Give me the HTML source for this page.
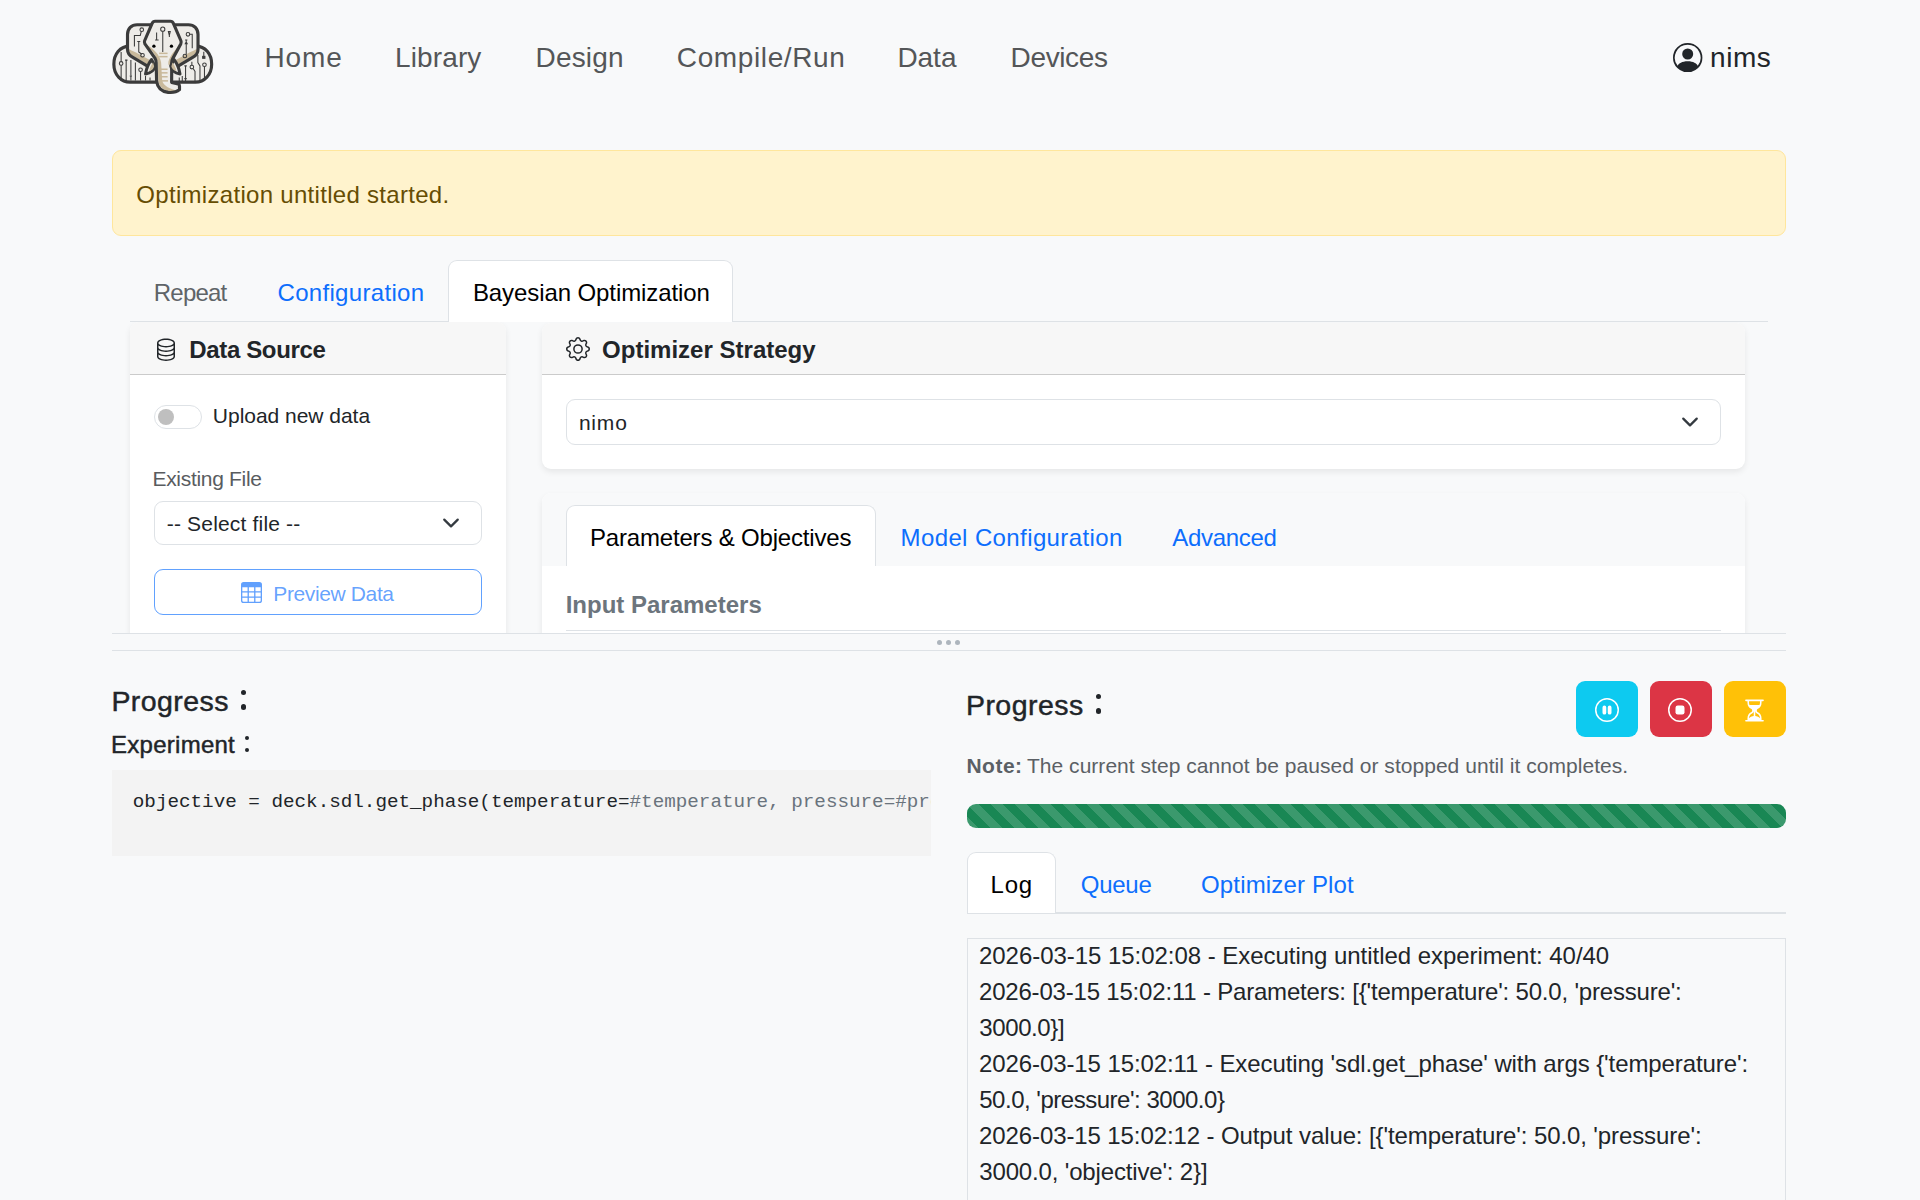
<!DOCTYPE html>
<html><head><meta charset="utf-8"><title>Optimization</title>
<style>
html,body{margin:0;padding:0;}
body{width:1920px;height:1200px;overflow:hidden;background:#f8f9fa;position:relative;font-family:"Liberation Sans",sans-serif;color:#212529;}
.t{position:absolute;line-height:1;white-space:nowrap;}
.r,.a{position:absolute;}
.b{font-weight:bold;}
.m{-webkit-text-stroke:0.45px currentColor;}
</style></head><body>
<svg class="a" style="left:105px;top:10px" width="115" height="90" viewBox="0 0 1533 1200">
<defs>
<g id="lowlobe"><path d="M335,482 C195,482 118,595 118,722 C118,862 215,962 335,962 L720,962 L720,482 Z" fill="#eeece8" stroke="#3b3b3b" stroke-width="42"/></g>
<g id="uplobe">
  <path d="M650,196 L428,196 C352,196 300,250 300,328 L300,525 C300,575 322,603 372,632 L600,768 L680,720 L650,196 Z" fill="#eeece8"/>
  <path d="M302,505 C312,560 340,590 380,612 L600,745 L640,690 L420,570 C370,545 330,530 302,505 Z" fill="#c9b99b"/>
</g>
<g id="upline"><path d="M650,196 L428,196 C352,196 300,250 300,328 L300,525 C300,575 322,603 372,632 L600,768" fill="none" stroke="#3b3b3b" stroke-width="42" stroke-linejoin="round"/></g>
</defs>
<use href="#lowlobe"/>
<use href="#lowlobe" transform="translate(1540,0) scale(-1,1)"/>
<g stroke="#3b3b3b" stroke-width="14" fill="none">
  <path d="M215,560 V940"/><circle cx="215" cy="712" r="24" fill="#eeece8"/>
  <path d="M282,668 V940 M268,668 H300"/>
  <path d="M345,668 V870 M330,880 H360 M345,880 V940"/>
  <path d="M405,700 V940"/>
  <path d="M474,820 V940"/><circle cx="474" cy="796" r="24" fill="#eeece8"/>
  <path d="M540,880 V940 M600,900 V940"/>
  <!-- right lower -->
  <path d="M1326,754 V940"/><circle cx="1326" cy="730" r="24" fill="#eeece8"/>
  <path d="M1317,558 V620"/><rect x="1302" y="618" width="30" height="26" fill="#3b3b3b"/>
  <path d="M1238,600 V700 L1266,745 V945"/>
  <path d="M1158,690 V737 M1175,780 L1200,820 V945"/><circle cx="1158" cy="761" r="24" fill="#eeece8"/>
  <path d="M1074,745 V945 M1058,745 H1090 M1058,915 H1090"/>
  <path d="M990,900 V945 M1030,880 V945"/>
</g>
<use href="#uplobe"/>
<use href="#uplobe" transform="translate(1540,0) scale(-1,1)"/>
<g stroke="#3b3b3b" stroke-width="14" fill="none">
  <circle cx="490" cy="262" r="24"/>
  <path d="M484,286 L470,340 H392 V485"/>
  <path d="M430,420 H470 M450,420 V560 L490,590"/><circle cx="500" cy="603" r="24"/>
  <!-- right upper -->
  <circle cx="1106" cy="324" r="24"/>
  <path d="M1130,324 H1163 V510"/>
  <path d="M1083,399 V590 M1068,399 H1098 M1070,450 L1083,425 L1096,450 Z"/><circle cx="1065" cy="613" r="24"/>
</g>
<use href="#upline"/>
<use href="#upline" transform="translate(1540,0) scale(-1,1)"/>
<!-- head -->
<path d="M668,150 L872,150 Q900,150 912,178 L1012,410 Q1020,430 1010,452 L905,645 Q890,672 890,700 L888,965 L975,985 Q993,990 993,1012 L993,1062 Q940,1108 842,1098 Q705,1080 688,950 L682,700 Q682,672 668,645 L532,452 Q520,430 528,410 L628,178 Q640,150 668,150 Z" fill="#eeece8"/>
<path d="M540,455 C600,510 680,590 700,690 L712,950 C722,1030 790,1080 900,1092 L960,1072 C880,1062 775,1010 762,940 L748,700 C733,600 650,510 540,455 Z" fill="#c9b99b"/>
<path d="M1000,455 C950,520 865,600 845,690 L843,730 L895,730 L895,690 C905,610 950,530 1000,455 Z" fill="#c9b99b"/>
<g fill="#c9b99b">
<rect x="722" y="568" width="112" height="20"/><rect x="722" y="612" width="112" height="20"/>
<rect x="722" y="780" width="112" height="20"/><rect x="722" y="828" width="112" height="20"/>
<rect x="735" y="880" width="100" height="20"/><rect x="760" y="935" width="80" height="20"/>
</g>
<g stroke="#3b3b3b" stroke-width="14" fill="none">
<circle cx="770" cy="255" r="28"/><path d="M770,283 V560"/>
<path d="M688,300 V398 M668,400 H715"/>
<path d="M845,288 H870 L858,340 Z M858,340 V360"/>
</g>
<circle cx="652" cy="482" r="22" fill="#000"/><circle cx="886" cy="482" r="22" fill="#000"/>
<path d="M668,150 L872,150 Q900,150 912,178 L1012,410 Q1020,430 1010,452 L905,645 Q890,672 890,700 L888,965 L975,985 Q993,990 993,1012 L993,1062 Q940,1108 842,1098 Q705,1080 688,950 L682,700 Q682,672 668,645 L532,452 Q520,430 528,410 L628,178 Q640,150 668,150 Z" fill="none" stroke="#3b3b3b" stroke-width="42" stroke-linejoin="round"/>
<!-- tusks -->
<path d="M620,660 C575,720 550,790 540,852 C610,845 655,805 665,745 Z" fill="#eeece8" stroke="#3b3b3b" stroke-width="40" stroke-linejoin="round"/>
<path d="M640,700 C600,760 590,800 590,815 C630,805 650,780 655,750 Z" fill="#c9b99b"/>
<path d="M920,660 C965,720 990,790 1000,852 C930,845 885,805 875,745 Z" fill="#eeece8" stroke="#3b3b3b" stroke-width="40" stroke-linejoin="round"/>
<path d="M900,700 C940,760 950,800 950,815 C910,805 890,780 885,750 Z" fill="#c9b99b"/>
</svg>

<div class="t " style="left:264.49px;top:44.09px;font-size:28px;color:#545658;letter-spacing:0.870px;">Home</div>
<div class="t " style="left:394.99px;top:44.09px;font-size:28px;color:#545658;letter-spacing:0.128px;">Library</div>
<div class="t " style="left:535.49px;top:44.09px;font-size:28px;color:#545658;letter-spacing:0.176px;">Design</div>
<div class="t " style="left:676.80px;top:44.09px;font-size:28px;color:#545658;letter-spacing:0.618px;">Compile/Run</div>
<div class="t " style="left:897.39px;top:44.09px;font-size:28px;color:#545658;letter-spacing:-0.023px;">Data</div>
<div class="t " style="left:1010.59px;top:44.09px;font-size:28px;color:#545658;letter-spacing:-0.370px;">Devices</div>
<svg class="a" style="left:1673.2px;top:43px;" width="29.4" height="29.4" viewBox="0 0 16 16" fill="#212529"><path d="M11 6a3 3 0 1 1-6 0 3 3 0 0 1 6 0"/><path fill-rule="evenodd" d="M0 8a8 8 0 1 1 16 0A8 8 0 0 1 0 8m8-7a7 7 0 0 0-5.468 11.37C3.242 11.226 4.805 10 8 10s4.757 1.225 5.468 2.37A7 7 0 0 0 8 1"/></svg>
<div class="t " style="left:1710.11px;top:44.19px;font-size:28px;color:#212529;letter-spacing:0.507px;">nims</div>
<div class="r" style="left:112px;top:150px;width:1674px;height:86px;background:#fff3cd;border:1.5px solid #ffe69c;border-radius:9px;box-sizing:border-box;"></div>
<div class="t " style="left:136.36px;top:182.68px;font-size:24px;color:#664d03;letter-spacing:0.299px;">Optimization untitled started.</div>
<div class="r" style="left:130px;top:320.5px;width:1638px;height:1.5px;background:#dee2e6;"></div>
<div class="r" style="left:447.8px;top:259.8px;width:285.6px;height:62.5px;background:#fff;border:1.5px solid #dee2e6;border-bottom:none;border-radius:9px 9px 0 0;box-sizing:border-box;"></div>
<div class="t " style="left:153.82px;top:280.68px;font-size:24px;color:#5f6468;letter-spacing:-0.808px;">Repeat</div>
<div class="t " style="left:277.50px;top:280.78px;font-size:24px;color:#0d6efd;letter-spacing:0.318px;">Configuration</div>
<div class="t " style="left:472.92px;top:281.08px;font-size:24px;color:#000;letter-spacing:-0.090px;">Bayesian Optimization</div>
<div class="a" style="left:0;top:322px;width:1920px;height:311px;overflow:hidden;">
<div class="r" style="left:130px;top:0px;width:376px;height:400px;background:#fff;border-radius:9px;box-shadow:0 3px 6px rgba(0,0,0,.075);"></div>
<div class="r" style="left:130px;top:0px;width:376px;height:52.5px;background:#f7f7f7;border-radius:9px 9px 0 0;border-bottom:1.5px solid rgba(0,0,0,.175);box-sizing:border-box;"></div>
<div class="r" style="left:542px;top:0.5px;width:1203px;height:146.5px;background:#fff;border-radius:9px;box-shadow:0 3px 6px rgba(0,0,0,.075);"></div>
<div class="r" style="left:542px;top:0.5px;width:1203px;height:52px;background:#f7f7f7;border-radius:9px 9px 0 0;border-bottom:1.5px solid rgba(0,0,0,.175);box-sizing:border-box;"></div>
<div class="r" style="left:542px;top:171px;width:1203px;height:400px;background:#fff;border-radius:9px;box-shadow:0 3px 6px rgba(0,0,0,.075);"></div>
<div class="r" style="left:542px;top:171px;width:1203px;height:72.5px;background:#f8f9fa;border-radius:9px 9px 0 0;"></div>
<div class="r" style="left:566px;top:183px;width:309.5px;height:61px;background:#fff;border:1.5px solid #dee2e6;border-bottom:none;border-radius:9px 9px 0 0;box-sizing:border-box;"></div>
</div>
<svg class="a" style="left:153.5px;top:337px;" width="24" height="24" viewBox="0 0 16 16" fill="#212529"><path d="M4.318 2.687C5.234 2.271 6.536 2 8 2s2.766.27 3.682.687C12.644 3.125 13 3.627 13 4c0 .374-.356.875-1.318 1.313C10.766 5.729 9.464 6 8 6s-2.766-.27-3.682-.687C3.356 4.875 3 4.373 3 4c0-.374.356-.875 1.318-1.313M13 5.698V7c0 .374-.356.875-1.318 1.313C10.766 8.729 9.464 9 8 9s-2.766-.27-3.682-.687C3.356 7.875 3 7.373 3 7V5.698c.271.202.58.378.904.525C4.978 6.711 6.427 7 8 7s3.022-.289 4.096-.777A5 5 0 0 0 13 5.698M14 4c0-1.007-.875-1.755-1.904-2.223C11.022 1.289 9.573 1 8 1s-3.022.289-4.096.777C2.875 2.245 2 2.993 2 4v9c0 1.007.875 1.755 1.904 2.223C4.978 15.711 6.427 16 8 16s3.022-.289 4.096-.777C13.125 14.755 14 14.007 14 13zm-1 4.698V10c0 .374-.356.875-1.318 1.313C10.766 11.729 9.464 12 8 12s-2.766-.27-3.682-.687C3.356 10.875 3 10.373 3 10V8.698c.271.202.58.378.904.525C4.978 9.711 6.427 10 8 10s3.022-.289 4.096-.777A5 5 0 0 0 13 8.698m0 3V13c0 .374-.356.875-1.318 1.313C10.766 14.729 9.464 15 8 15s-2.766-.27-3.682-.687C3.356 13.875 3 13.373 3 13v-1.302c.271.202.58.378.904.525C4.978 12.711 6.427 13 8 13s3.022-.289 4.096-.777c.324-.147.633-.323.904-.525"/></svg>
<div class="t b " style="left:189.28px;top:337.68px;font-size:24px;color:#212529;letter-spacing:-0.354px;">Data Source</div>
<div class="r" style="left:154px;top:405px;width:47.75px;height:24px;background:#fff;border:1.2px solid #dee2e6;border-radius:12px;box-sizing:border-box;"></div>
<div class="r" style="left:157.85px;top:408.75px;width:16.3px;height:16.3px;background:#bfbfbf;border-radius:50%;"></div>
<div class="t " style="left:212.87px;top:404.92px;font-size:21px;color:#212529;letter-spacing:-0.027px;">Upload new data</div>
<div class="t " style="left:152.47px;top:468.42px;font-size:21px;color:#595c5f;letter-spacing:-0.305px;">Existing File</div>
<div class="r" style="left:154px;top:500.5px;width:328px;height:44.5px;background:#fff;border:1.5px solid #dee2e6;border-radius:9px;box-sizing:border-box;"></div>
<div class="t " style="left:166.75px;top:512.92px;font-size:21px;color:#212529;letter-spacing:0.176px;">-- Select file --</div>
<svg class="a" style="left:441.9px;top:513.9px;" width="18" height="18" viewBox="0 0 16 16" fill="none"><path d="m2 5 6 6 6-6" fill="none" stroke="#343a40" stroke-width="2" stroke-linecap="round" stroke-linejoin="round"/></svg>
<div class="r" style="left:154px;top:569.3px;width:328px;height:45.5px;border:1.5px solid rgba(13,110,253,.65);border-radius:9px;box-sizing:border-box;"></div>
<svg class="a" style="left:241.3px;top:581.9px;opacity:.65;" width="21" height="21" viewBox="0 0 16 16" fill="#0d6efd"><path d="M0 2a2 2 0 0 1 2-2h12a2 2 0 0 1 2 2v12a2 2 0 0 1-2 2H2a2 2 0 0 1-2-2zm15 2h-4v3h4zm0 4h-4v3h4zm0 4h-4v3h3a1 1 0 0 0 1-1zm-5 3v-3H6v3zm-5 0v-3H1v2a1 1 0 0 0 1 1zm-4-4h4V8H1zm0-4h4V4H1zm5-3v3h4V4zm4 4H6v3h4z"/></svg>
<div class="t " style="left:273.27px;top:582.62px;font-size:21px;color:rgba(13,110,253,.65);letter-spacing:-0.374px;">Preview Data</div>
<svg class="a" style="left:566px;top:337px;" width="24" height="24" viewBox="0 0 16 16" fill="#212529"><path d="M8 4.754a3.246 3.246 0 1 0 0 6.492 3.246 3.246 0 0 0 0-6.492M5.754 8a2.246 2.246 0 1 1 4.492 0 2.246 2.246 0 0 1-4.492 0"/><path d="M9.796 1.343c-.527-1.79-3.065-1.79-3.592 0l-.094.319a.873.873 0 0 1-1.255.52l-.292-.16c-1.64-.892-3.433.902-2.54 2.541l.159.292a.873.873 0 0 1-.52 1.255l-.319.094c-1.79.527-1.790 3.065 0 3.592l.319.094a.873.873 0 0 1 .52 1.255l-.16.292c-.892 1.64.901 3.434 2.541 2.54l.292-.159a.873.873 0 0 1 1.255.52l.094.319c.527 1.79 3.065 1.79 3.592 0l.094-.319a.873.873 0 0 1 1.255-.52l.292.16c1.64.893 3.434-.902 2.54-2.541l-.159-.292a.873.873 0 0 1 .52-1.255l.319-.094c1.79-.527 1.79-3.065 0-3.592l-.319-.094a.873.873 0 0 1-.52-1.255l.16-.292c.893-1.64-.902-3.433-2.541-2.54l-.292.159a.873.873 0 0 1-1.255-.52zm-2.633.283c.246-.835 1.428-.835 1.674 0l.094.319a1.873 1.873 0 0 0 2.693 1.115l.291-.16c.764-.415 1.6.42 1.184 1.185l-.159.292a1.873 1.873 0 0 0 1.116 2.692l.318.094c.835.246.835 1.428 0 1.674l-.319.094a1.873 1.873 0 0 0-1.115 2.693l.16.291c.415.764-.42 1.6-1.185 1.184l-.291-.159a1.873 1.873 0 0 0-2.693 1.116l-.094.318c-.246.835-1.428.835-1.674 0l-.094-.319a1.873 1.873 0 0 0-2.692-1.115l-.292.16c-.764.415-1.6-.42-1.184-1.185l.159-.291A1.873 1.873 0 0 0 1.945 8.93l-.319-.094c-.835-.246-.835-1.428 0-1.674l.319-.094A1.873 1.873 0 0 0 3.06 4.377l-.16-.292c-.415-.764.42-1.6 1.185-1.184l.292.159a1.873 1.873 0 0 0 2.692-1.115z"/></svg>
<div class="t b " style="left:602.04px;top:337.98px;font-size:24px;color:#212529;letter-spacing:0.013px;">Optimizer Strategy</div>
<div class="r" style="left:566px;top:399px;width:1155px;height:45.5px;background:#fff;border:1.5px solid #dee2e6;border-radius:9px;box-sizing:border-box;"></div>
<div class="t " style="left:578.88px;top:411.92px;font-size:21px;color:#212529;letter-spacing:0.813px;">nimo</div>
<svg class="a" style="left:1681px;top:412.8px;" width="18" height="18" viewBox="0 0 16 16" fill="none"><path d="m2 5 6 6 6-6" fill="none" stroke="#343a40" stroke-width="2" stroke-linecap="round" stroke-linejoin="round"/></svg>
<div class="t " style="left:590.02px;top:525.88px;font-size:24px;color:#000;letter-spacing:-0.183px;">Parameters &amp; Objectives</div>
<div class="t " style="left:900.52px;top:525.68px;font-size:24px;color:#0d6efd;letter-spacing:0.391px;">Model Configuration</div>
<div class="t " style="left:1172.24px;top:525.68px;font-size:24px;color:#0d6efd;letter-spacing:-0.297px;">Advanced</div>
<div class="t b " style="left:565.68px;top:592.68px;font-size:24px;color:#6c757d;">Input Parameters</div>
<div class="r" style="left:566px;top:629.5px;width:1155px;height:1.5px;background:#dee2e6;"></div>
<div class="r" style="left:112px;top:632.5px;width:1674px;height:1.5px;background:#dee2e6;"></div>
<div class="r" style="left:112px;top:649.5px;width:1674px;height:1.5px;background:#dee2e6;"></div>
<div class="r" style="left:936.6px;top:639.6px;width:5.6px;height:5.6px;background:#adb5bd;border-radius:50%;"></div>
<div class="r" style="left:945.6px;top:639.6px;width:5.6px;height:5.6px;background:#adb5bd;border-radius:50%;"></div>
<div class="r" style="left:954.7px;top:639.6px;width:5.6px;height:5.6px;background:#adb5bd;border-radius:50%;"></div>
<div class="t m" style="left:111.40px;top:686.67px;font-size:28.5px;color:#212529;letter-spacing:0.433px;">Progress</div>
<div class="r" style="left:240.9px;top:689.7px;width:5.2px;height:5.2px;background:#212529;border-radius:50%;"></div>
<div class="r" style="left:240.9px;top:704.4px;width:5.2px;height:5.2px;background:#212529;border-radius:50%;"></div>
<div class="t m" style="left:111.02px;top:732.68px;font-size:24px;color:#212529;letter-spacing:0.264px;">Experiment</div>
<div class="r" style="left:244.85px;top:735.85px;width:4.3px;height:4.3px;background:#212529;border-radius:50%;"></div>
<div class="r" style="left:244.85px;top:747.55px;width:4.3px;height:4.3px;background:#212529;border-radius:50%;"></div>
<div class="r" style="left:112px;top:770px;width:819px;height:86px;background:#f3f3f3;"></div>
<div class="a" style="left:112px;top:770px;width:819px;height:86px;overflow:hidden;">
<div class="t" style="left:20.8px;top:23.14px;font-size:19.26px;font-family:'Liberation Mono',monospace;color:#212529;">objective = deck.sdl.get_phase(temperature=<span style="color:#6a737d">#temperature, pressure=#pressure)</span></div>
</div>
<div class="t m" style="left:965.95px;top:690.77px;font-size:28.5px;color:#212529;letter-spacing:0.468px;">Progress</div>
<div class="r" style="left:1095.9px;top:693.9px;width:5.2px;height:5.2px;background:#212529;border-radius:50%;"></div>
<div class="r" style="left:1095.9px;top:708.4px;width:5.2px;height:5.2px;background:#212529;border-radius:50%;"></div>
<div class="r" style="left:1576px;top:681px;width:62px;height:56px;background:#0dcaf0;border-radius:9px;"></div>
<div class="r" style="left:1650px;top:681px;width:62px;height:56px;background:#dc3545;border-radius:9px;"></div>
<div class="r" style="left:1724px;top:681px;width:62px;height:56px;background:#ffc107;border-radius:9px;"></div>
<svg class="a" style="left:1594.5px;top:698px;" width="24" height="24" viewBox="0 0 16 16" fill="#fff"><path d="M8 15A7 7 0 1 1 8 1a7 7 0 0 1 0 14m0 1A8 8 0 1 0 8 0a8 8 0 0 0 0 16"/><path d="M5 6.25a1.25 1.25 0 1 1 2.5 0v3.5a1.25 1.25 0 1 1-2.5 0zm3.5 0a1.25 1.25 0 1 1 2.5 0v3.5a1.25 1.25 0 1 1-2.5 0z"/></svg>
<svg class="a" style="left:1668.25px;top:698px;" width="24" height="24" viewBox="0 0 16 16" fill="#fff"><path d="M8 15A7 7 0 1 1 8 1a7 7 0 0 1 0 14m0 1A8 8 0 1 0 8 0a8 8 0 0 0 0 16"/><path d="M5 6.5A1.5 1.5 0 0 1 6.5 5h3A1.5 1.5 0 0 1 11 6.5v3A1.5 1.5 0 0 1 9.5 11h-3A1.5 1.5 0 0 1 5 9.5z"/></svg>
<svg class="a" style="left:1741.9px;top:697.5px;" width="25" height="25" viewBox="0 0 16 16" fill="#fff"><path d="M2.5 15a.5.5 0 1 1 0-1h1v-1a4.5 4.5 0 0 1 2.557-4.06c.29-.139.443-.377.443-.59v-.7c0-.213-.154-.451-.443-.59A4.5 4.5 0 0 1 3.5 3V2h-1a.5.5 0 0 1 0-1h11a.5.5 0 0 1 0 1h-1v1a4.5 4.5 0 0 1-2.557 4.06c-.29.139-.443.377-.443.59v.7c0 .213.154.451.443.59A4.5 4.5 0 0 1 12.5 13v1h1a.5.5 0 0 1 0 1zm2-13v1c0 .537.12 1.045.337 1.5h6.326c.216-.455.337-.963.337-1.5V2zm3 6.35c0 .701-.478 1.236-1.011 1.492A3.5 3.5 0 0 0 4.5 13s.866-1.299 3-1.48zm1 0v3.17c2.134.181 3 1.48 3 1.48a3.5 3.5 0 0 0-1.989-3.158C8.978 9.586 8.5 9.052 8.5 8.351z"/></svg>
<div class="t b " style="left:966.38px;top:755.32px;font-size:21px;color:#5b6065;letter-spacing:0.514px;">Note:</div>
<div class="t " style="left:1026.93px;top:755.32px;font-size:21px;color:#5b6065;letter-spacing:0.037px;">The current step cannot be paused or stopped until it completes.</div>
<div class="r" style="left:967px;top:804px;width:819px;height:24px;border-radius:9px;background-color:#198754;background-image:linear-gradient(45deg,rgba(255,255,255,.15) 25%,transparent 25%,transparent 50%,rgba(255,255,255,.15) 50%,rgba(255,255,255,.15) 75%,transparent 75%,transparent);background-size:24px 24px;"></div>
<div class="r" style="left:967px;top:912px;width:819px;height:1.5px;background:#dee2e6;"></div>
<div class="r" style="left:967px;top:851.7px;width:89px;height:61.8px;background:#fff;border:1.5px solid #dee2e6;border-bottom:none;border-radius:9px 9px 0 0;box-sizing:border-box;"></div>
<div class="t " style="left:990.62px;top:872.68px;font-size:24px;color:#000;letter-spacing:0.680px;">Log</div>
<div class="t " style="left:1080.76px;top:872.68px;font-size:24px;color:#0d6efd;letter-spacing:-0.250px;">Queue</div>
<div class="t " style="left:1201.06px;top:872.68px;font-size:24px;color:#0d6efd;letter-spacing:0.154px;">Optimizer Plot</div>
<div class="r" style="left:967px;top:938px;width:819px;height:300px;border:1.5px solid #dee2e6;box-sizing:border-box;"></div>
<div class="t " style="left:979.00px;top:944.38px;font-size:24px;color:#212529;letter-spacing:-0.039px;">2026-03-15 15:02:08 - Executing untitled experiment: 40/40</div>
<div class="t " style="left:979.00px;top:980.38px;font-size:24px;color:#212529;letter-spacing:-0.193px;">2026-03-15 15:02:11 - Parameters: [{&#x27;temperature&#x27;: 50.0, &#x27;pressure&#x27;:</div>
<div class="t " style="left:979.30px;top:1016.38px;font-size:24px;color:#212529;letter-spacing:-0.400px;">3000.0}]</div>
<div class="t " style="left:979.00px;top:1052.38px;font-size:24px;color:#212529;letter-spacing:-0.091px;">2026-03-15 15:02:11 - Executing &#x27;sdl.get_phase&#x27; with args {&#x27;temperature&#x27;:</div>
<div class="t " style="left:979.24px;top:1088.38px;font-size:24px;color:#212529;letter-spacing:-0.486px;">50.0, &#x27;pressure&#x27;: 3000.0}</div>
<div class="t " style="left:979.00px;top:1124.38px;font-size:24px;color:#212529;letter-spacing:-0.100px;">2026-03-15 15:02:12 - Output value: [{&#x27;temperature&#x27;: 50.0, &#x27;pressure&#x27;:</div>
<div class="t " style="left:979.30px;top:1160.38px;font-size:24px;color:#212529;letter-spacing:-0.163px;">3000.0, &#x27;objective&#x27;: 2}]</div>
</body></html>
